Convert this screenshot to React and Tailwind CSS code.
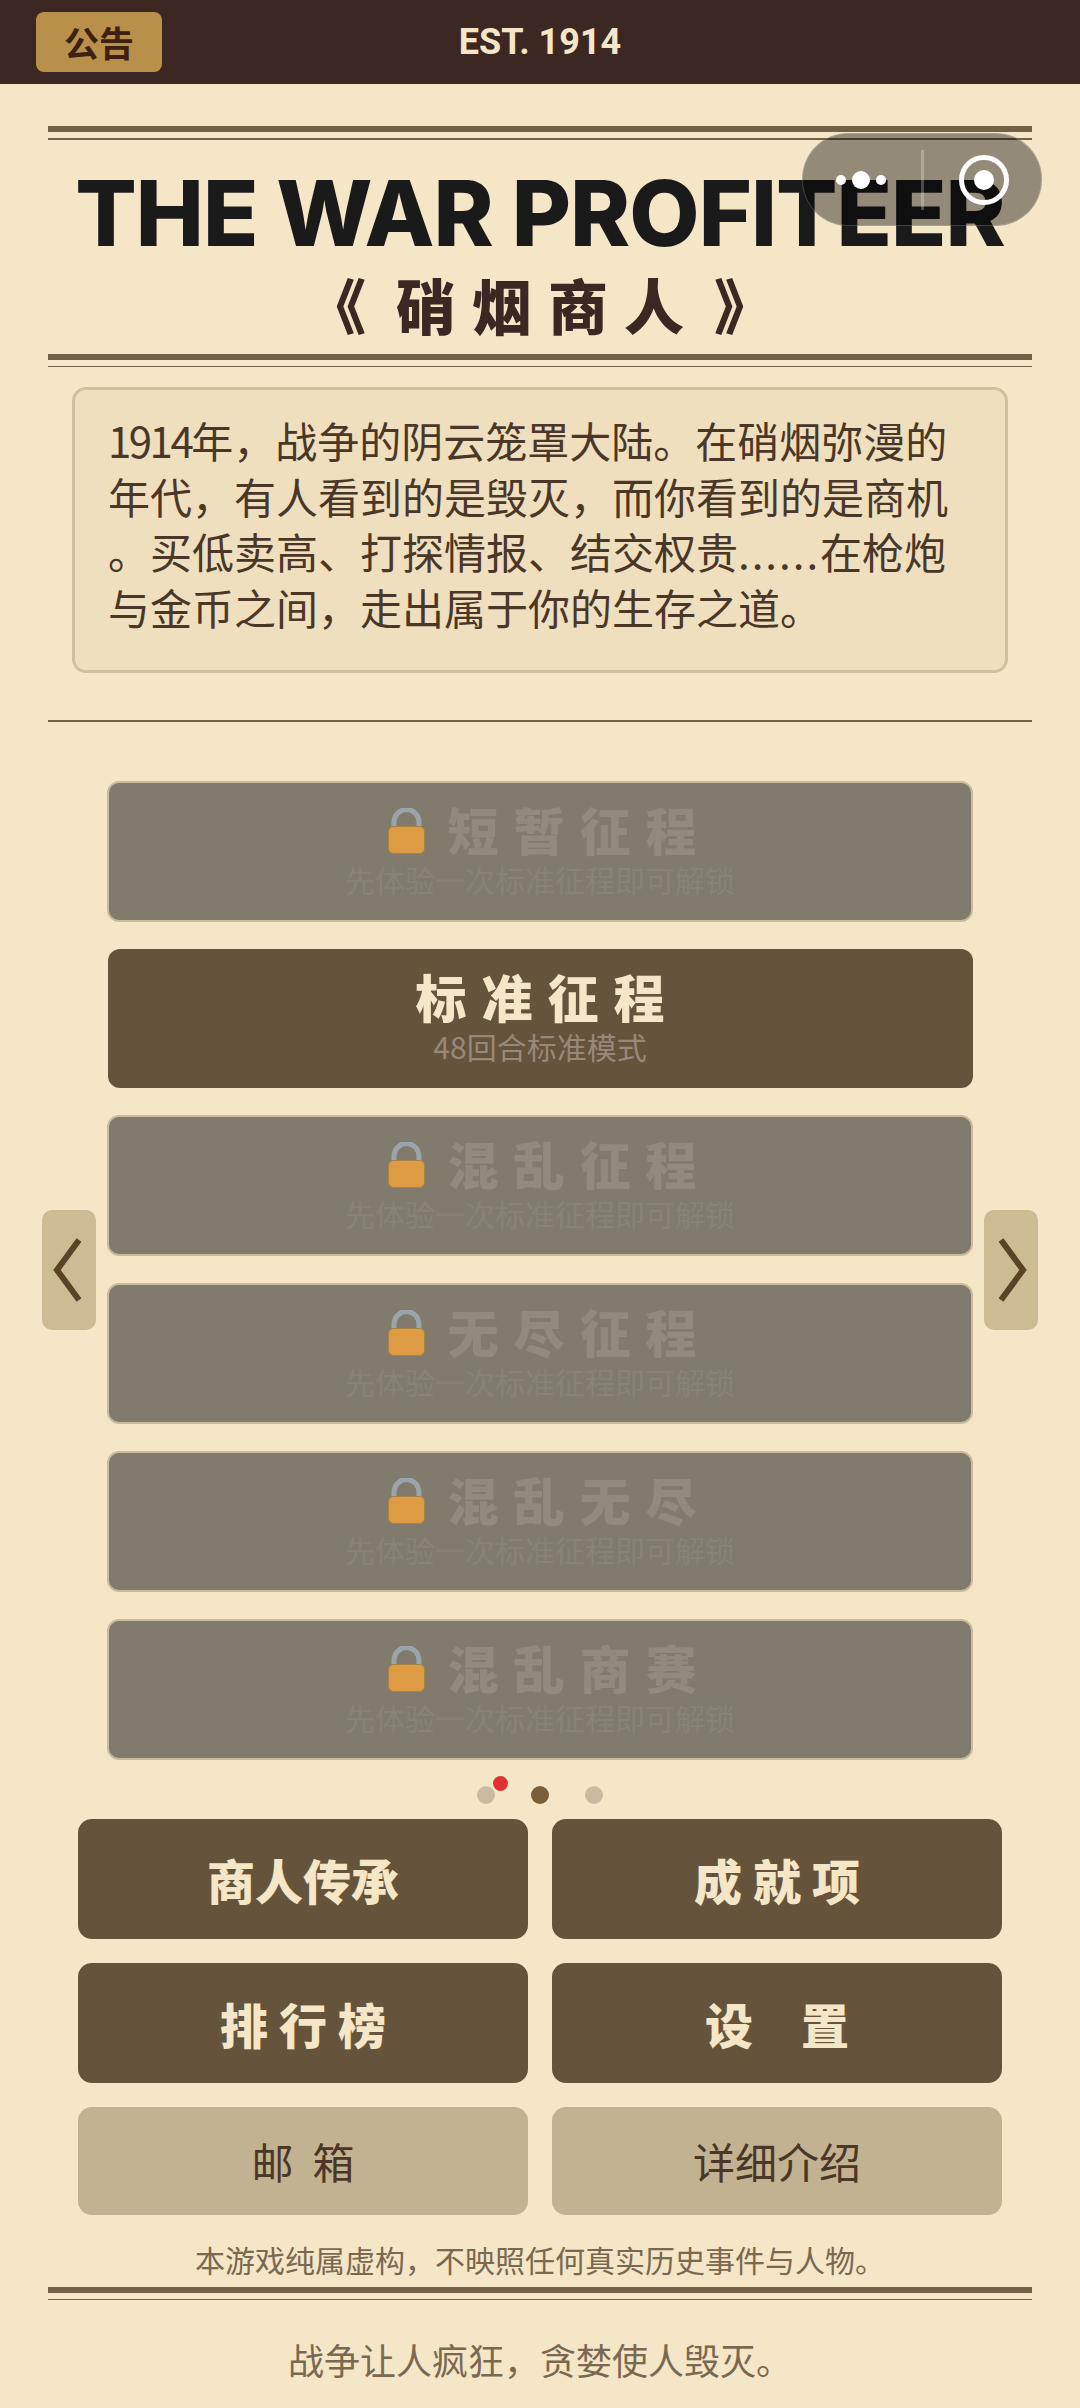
import React from "react";

const CJK = "font-['Noto_Sans_CJK_SC','Noto_Sans',sans-serif]";

const Rule = () => (
  <div>
    <div className="h-[6px] bg-[#736047]" />
    <div className="mt-[6px] h-[1.5px] bg-[#736047]" />
  </div>
);

const Lock = () => (
  <svg width="37" height="46" viewBox="0 0 37 46" className="mt-[4px] shrink-0">
    <path d="M6 22V14a12.5 12.5 0 0 1 25 0v8" fill="none" stroke="#9aa5ab" strokeWidth="5" />
    <rect x="0.5" y="18.5" width="36" height="27" rx="5" fill="#dd9c44" stroke="#a9803f" strokeWidth="1" />
  </svg>
);

const Chevron = ({ right }) => (
  <svg width="54" height="120" viewBox="0 0 54 120">
    <path
      d={right ? "M17 30 L39 60 L17 90" : "M37 30 L15 60 L37 90"}
      fill="none"
      stroke="#5a4326"
      strokeWidth="6"
    />
  </svg>
);

const ArrowButton = ({ right }) => (
  <div className="h-[120px] w-[54px] shrink-0 rounded-[10px] bg-[#cdbb94]">
    <Chevron right={right} />
  </div>
);

const modes = [
  { title: "短暂征程", locked: true },
  { title: "标准征程", sub: "48回合标准模式" },
  { title: "混乱征程", locked: true },
  { title: "无尽征程", locked: true },
  { title: "混乱无尽", locked: true },
  { title: "混乱商赛", locked: true },
];

const ModeCard = ({ title, sub, locked }) =>
  locked ? (
    <div className="flex h-[141px] w-[866px] flex-col items-center rounded-[12px] border-2 border-[#c9bb9b] bg-[#807b6d]">
      <div className="mt-[18px] flex h-[56px] items-center gap-[22px] pl-[20px]">
        <Lock />
        <span className="text-[51px] font-black leading-[56px] tracking-[15px] text-[#918b7e]">{title}</span>
      </div>
      <div className="mt-[2px] text-[30px] leading-[40px] text-[#888375]">先体验一次标准征程即可解锁</div>
    </div>
  ) : (
    <div className="flex h-[139px] w-[865px] flex-col items-center rounded-[12px] bg-[#65543b]">
      <div className="mt-[19px] pl-[15px] text-[51px] font-black leading-[56px] tracking-[15px] text-[#f5e6c8]">{title}</div>
      <div className="mt-[2px] text-[30px] leading-[40px] text-[#97897a]">{sub}</div>
    </div>
  );

const DarkButton = ({ children }) => (
  <div className="flex h-[120px] items-center justify-center whitespace-pre rounded-[14px] bg-[#65543b] text-[48px] font-black text-[#f5e6c8]">
    {children}
  </div>
);

const LightButton = ({ children }) => (
  <div className="flex h-[108px] items-center justify-center whitespace-pre rounded-[14px] bg-[#c2b291] text-[42px] text-[#4a3728]">
    {children}
  </div>
);

export default function App() {
  return (
    <div className={`relative h-[2408px] w-[1080px] overflow-hidden bg-[#f5e6c8] ${CJK}`}>
      {/* top bar */}
      <div className="grid h-[84px] grid-cols-[1fr_auto_1fr] items-center bg-[#3d2723] px-[36px]">
        <div className="flex h-[60px] w-[126px] items-center justify-center rounded-[8px] bg-[#b8904a] text-[35px] font-bold text-[#3d2010]">
          公告
        </div>
        <div className="font-['Roboto',sans-serif] text-[36px] font-bold text-[#f5e6c8]">EST. 1914</div>
        <div />
      </div>

      <div className="px-[48px] pt-[42px]">
        <Rule />
        <div className="mt-[18px] whitespace-nowrap text-center font-['Inter',sans-serif] text-[91px] font-extrabold leading-[110px] tracking-[-1px] text-[#1a1a1a]">
          THE WAR PROFITEER
        </div>
        <div className="mt-[1px] whitespace-nowrap pl-[16px] text-center text-[60px] font-black leading-[70px] tracking-[16px] text-[#3d2723]">
          <span className="mr-[14px]">《</span>硝烟商人<span className="ml-[14px]">》</span>
        </div>
        <div className="mt-[15px]">
          <Rule />
        </div>

        {/* intro */}
        <div className="mx-[24px] mt-[20px] h-[286px] whitespace-nowrap rounded-[14px] border-[3px] border-[#cfc0a0] bg-[#efdfbf] pl-[33px] pt-[22px] text-[42px] leading-[55.5px] text-[#4a3728]">
          <span className="tracking-[-2.5px]">1914</span>年，战争的阴云笼罩大陆。在硝烟弥漫的
          <br />
          年代，有人看到的是毁灭，而你看到的是商机
          <br />
          。买低卖高、打探情报、结交权贵<span className="tracking-[2px]">......</span>在枪炮
          <br />
          与金币之间，走出属于你的生存之道。
        </div>

        <div className="mt-[47px] h-[1.5px] bg-[#736047]" />
      </div>

      {/* mode carousel */}
      <div className="mt-[59px] flex items-center justify-between px-[42px]">
        <ArrowButton />
        <div className="flex flex-col items-center gap-[27px]">
          {modes.map((m) => (
            <ModeCard key={m.title} {...m} />
          ))}
        </div>
        <ArrowButton right />
      </div>

      {/* pager */}
      <div className="mt-[26px] flex justify-center gap-[36px]">
        <div className="relative size-[18px] rounded-full bg-[#c9bb9f]">
          <div className="absolute -top-[10px] left-[16px] size-[15px] rounded-full bg-[#e03232]" />
        </div>
        <div className="size-[18px] rounded-full bg-[#7a5f38]" />
        <div className="size-[18px] rounded-full bg-[#c9bb9f]" />
      </div>

      {/* actions */}
      <div className="mt-[15px] grid grid-cols-2 gap-x-[24px] gap-y-[24px] px-[78px]">
        <DarkButton>商人传承</DarkButton>
        <DarkButton>成 就 项</DarkButton>
        <DarkButton>排 行 榜</DarkButton>
        <DarkButton>设{"\u3000"}置</DarkButton>
        <LightButton>邮{"  "}箱</LightButton>
        <LightButton>详细介绍</LightButton>
      </div>

      <div className="mt-[22px] text-center text-[30px] leading-[44px] text-[#7a6850]">
        本游戏纯属虚构，不映照任何真实历史事件与人物。
      </div>
      <div className="mt-[6px] px-[48px]">
        <Rule />
      </div>
      <div className="mt-[34px] text-center text-[36px] leading-[50px] text-[#7a6850]">
        战争让人疯狂，贪婪使人毁灭。
      </div>

      {/* host capsule over the page */}
      <div className="absolute left-[802px] top-[133px] h-[93px] w-[240px] rounded-[46px] border border-white/20 bg-black/40">
        <svg width="240" height="93" viewBox="0 0 240 93" className="absolute -left-px -top-px">
          <circle cx="39" cy="47" r="5" fill="#fff" />
          <circle cx="59" cy="47" r="9" fill="#fff" />
          <circle cx="79" cy="47" r="5" fill="#fff" />
          <rect x="119" y="17" width="3" height="60" fill="#fff" fillOpacity="0.25" />
          <circle cx="182" cy="47" r="22.5" fill="none" stroke="#fff" strokeWidth="5" />
          <circle cx="182" cy="47" r="10" fill="#fff" />
        </svg>
      </div>
    </div>
  );
}
